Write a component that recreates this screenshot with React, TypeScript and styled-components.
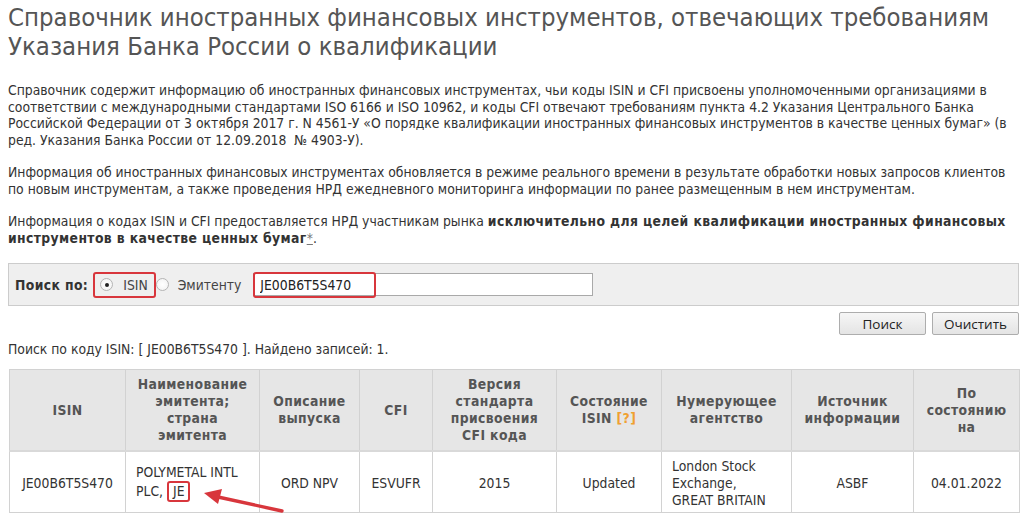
import React, { useState } from "react";
import styled, { createGlobalStyle } from "styled-components";

const GlobalStyle = createGlobalStyle`
  html, body {
    margin: 0;
    padding: 0;
    background: #fff;
  }
  body {
    font-family: "DejaVu Sans Condensed", "DejaVu Sans", Verdana, sans-serif;
    font-size: 13.8px;
    color: #333;
  }
`;

type Row = {
  isin: string;
  issuer: string;
  country: string;
  description: string;
  cfi: string;
  version: string;
  status: string;
  agency: string[];
  source: string;
  date: string;
};

const rows: Row[] = [
  {
    isin: "JE00B6T5S470",
    issuer: "POLYMETAL INTL PLC,",
    country: "JE",
    description: "ORD NPV",
    cfi: "ESVUFR",
    version: "2015",
    status: "Updated",
    agency: ["London Stock", "Exchange,", "GREAT BRITAIN"],
    source: "ASBF",
    date: "04.01.2022",
  },
];

const columns = [116, 134, 100, 73, 124, 105, 130, 122, 106];

const App = () => {
  const [mode, setMode] = useState<"isin" | "issuer">("isin");
  const [query, setQuery] = useState("JE00B6T5S470");

  return (
    <Page>
      <GlobalStyle />
      <Title>
        Справочник иностранных финансовых инструментов, отвечающих требованиям
        Указания Банка России о квалификации
      </Title>

      <Text>
        Справочник содержит информацию об иностранных финансовых инструментах,
        чьи коды ISIN и CFI присвоены уполномоченными организациями в
        соответствии с международными стандартами ISO 6166 и ISO 10962, и коды
        CFI отвечают требованиям пункта 4.2 Указания Центрального Банка
        Российской Федерации от 3 октября 2017 г. N 4561-У «О порядке
        квалификации иностранных финансовых инструментов в качестве ценных
        бумаг» (в ред. Указания Банка России от 12.09.2018&nbsp; №&nbsp;4903-У).
      </Text>
      <Text>
        Информация об иностранных финансовых инструментах обновляется в режиме
        реального времени в результате обработки новых запросов клиентов по
        новым инструментам, а также проведения НРД ежедневного мониторинга
        информации по ранее размещенным в нем инструментам.
      </Text>
      <Text>
        Информация о кодах ISIN и CFI предоставляется НРД участникам рынка{" "}
        <Strong>
          исключительно для целей квалификации иностранных финансовых
          инструментов в качестве ценных бумаг
        </Strong>
        <Note href="#">*</Note>.
      </Text>

      <SearchBox>
        <SearchLabel>Поиск по:</SearchLabel>
        <Mark>
          <RadioOption onClick={() => setMode("isin")}>
            <Radio $checked={mode === "isin"} />
            ISIN
          </RadioOption>
        </Mark>
        <RadioOption onClick={() => setMode("issuer")}>
          <Radio $checked={mode === "issuer"} />
          Эмитенту
        </RadioOption>
        <InputWrap>
          <Input value={query} onChange={(e) => setQuery(e.target.value)} />
          <InputMark />
        </InputWrap>
      </SearchBox>

      <Buttons>
        <Button>Поиск</Button>
        <Button>Очистить</Button>
      </Buttons>

      <Result>Поиск по коду ISIN: [ JE00B6T5S470 ]. Найдено записей: 1.</Result>

      <TableWrap>
        <Table>
          <colgroup>
            {columns.map((w, i) => (
              <col key={i} style={{ width: w }} />
            ))}
          </colgroup>
          <thead>
            <tr>
              <Th>ISIN</Th>
              <Th>Наименование эмитента; страна эмитента</Th>
              <Th>Описание выпуска</Th>
              <Th>CFI</Th>
              <Th>Версия стандарта присвоения CFI кода</Th>
              <Th>
                Состояние ISIN <Hint>[?]</Hint>
              </Th>
              <Th>Нумерующее агентство</Th>
              <Th>Источник информации</Th>
              <Th>По состоянию на</Th>
            </tr>
          </thead>
          <tbody>
            {rows.map((r) => (
              <tr key={r.isin}>
                <Td>{r.isin}</Td>
                <Td $left>
                  {r.issuer} <Mark $tight>{r.country}</Mark>
                </Td>
                <Td>{r.description}</Td>
                <Td>{r.cfi}</Td>
                <Td>{r.version}</Td>
                <Td>{r.status}</Td>
                <Td $left>
                  {r.agency.map((line) => (
                    <div key={line}>{line}</div>
                  ))}
                </Td>
                <Td>{r.source}</Td>
                <Td>{r.date}</Td>
              </tr>
            ))}
          </tbody>
        </Table>
        <Arrow viewBox="0 0 90 30" width="90" height="30">
          <path d="M78 21 L14 7" stroke="#d8363c" strokeWidth="3.4" strokeLinecap="round" />
          <path d="M0 3 L18 -1 L14 14 Z" fill="#d8363c" />
        </Arrow>
      </TableWrap>
    </Page>
  );
};

export default App;

const Page = styled.div`
  width: 1011px;
  padding: 0 6px 0 8px;
`;

const Title = styled.h1`
  margin: 3px 0 0;
  font-size: 25.5px;
  line-height: 29px;
  font-weight: normal;
  color: #555;
`;

const Text = styled.p`
  margin: 21px 0 0;
  line-height: 16.5px;
  color: #333;

  & + & {
    margin-top: 16px;
  }
`;

const Strong = styled.b`
  letter-spacing: 0.38px;
`;

const Note = styled.a`
  color: #777;
  text-decoration: underline;
`;

const SearchBox = styled.div`
  margin-top: 17px;
  height: 43px;
  box-sizing: border-box;
  display: flex;
  align-items: center;
  padding: 0 6px;
  background: #efefef;
  border: 1px solid #ccc;
`;

const SearchLabel = styled.span`
  font-weight: bold;
  letter-spacing: 0.38px;
  color: #333;
  margin-right: 5px;
`;

const Mark = styled.span<{ $tight?: boolean }>`
  display: inline-flex;
  align-items: center;
  border: 2px solid #d8363c;
  border-radius: 3px;
  padding: ${(p) => (p.$tight ? "0 4px" : "2px 6px 2px 5px")};
  height: ${(p) => (p.$tight ? "21px" : "26px")};
  box-sizing: border-box;
  vertical-align: middle;
`;

const RadioOption = styled.label`
  display: inline-flex;
  align-items: center;
  gap: 9px;
  cursor: pointer;
  color: #444;
  margin-right: 12px;

  ${Mark} & {
    margin-right: 0;
    gap: 10px;
  }
`;

const Radio = styled.span<{ $checked: boolean }>`
  width: 13px;
  height: 13px;
  box-sizing: border-box;
  border-radius: 50%;
  border: 1px solid #b5b5b5;
  background: radial-gradient(circle, #fff 0%, #f0f0f0 100%);
  position: relative;

  &::after {
    content: "";
    display: ${(p) => (p.$checked ? "block" : "none")};
    position: absolute;
    left: 3.5px;
    top: 3.5px;
    width: 4px;
    height: 4px;
    border-radius: 50%;
    background: #222;
  }
`;

const InputWrap = styled.span`
  position: relative;
  display: inline-block;
`;

const Input = styled.input`
  width: 340px;
  height: 23px;
  box-sizing: border-box;
  border: 1px solid #a9a9a9;
  padding: 0 6px;
  font-family: "DejaVu Sans Condensed", "DejaVu Sans", sans-serif;
  font-size: 13.8px;
  color: #222;
  background: #fff;
  outline: none;
`;

const InputMark = styled.span`
  position: absolute;
  left: 0;
  top: -1px;
  width: 123px;
  height: 26px;
  box-sizing: border-box;
  border: 2px solid #d8363c;
  border-radius: 3px;
  pointer-events: none;
`;

const Buttons = styled.div`
  display: flex;
  justify-content: flex-end;
  gap: 6px;
  margin-top: 6px;
`;

const Button = styled.button`
  width: 87px;
  height: 23px;
  font-family: "Open Sans", "Noto Sans", sans-serif;
  font-size: 13.5px;
  color: #222;
  background: linear-gradient(#f6f6f6, #e4e4e4);
  border: 1px solid #adadad;
  border-radius: 2px;
  padding: 0;
  cursor: pointer;
`;

const Result = styled.div`
  margin-top: 5px;
  line-height: 18px;
  color: #333;
`;

const TableWrap = styled.div`
  position: relative;
  margin-top: 11px;
`;

const Table = styled.table`
  width: 1010px;
  table-layout: fixed;
  border-collapse: collapse;
  margin-left: 1px;
`;

const Th = styled.th`
  background: #e6e6e6;
  border: 1px solid #d2d2d2;
  border-bottom: 2px solid #d9d9d9;
  height: 76px;
  padding: 2px 8px;
  font-weight: bold;
  letter-spacing: 0.38px;
  color: #555;
  line-height: 17px;
  text-align: center;
`;

const Hint = styled.span`
  color: #f0a030;
`;

const Td = styled.td<{ $left?: boolean }>`
  border: 1px solid #d2d2d2;
  height: 56px;
  padding: 3px 10px 1px;
  line-height: 17px;
  color: #333;
  text-align: ${(p) => (p.$left ? "left" : "center")};
`;

const Arrow = styled.svg`
  position: absolute;
  left: 196px;
  top: 121px;
  overflow: visible;
`;
